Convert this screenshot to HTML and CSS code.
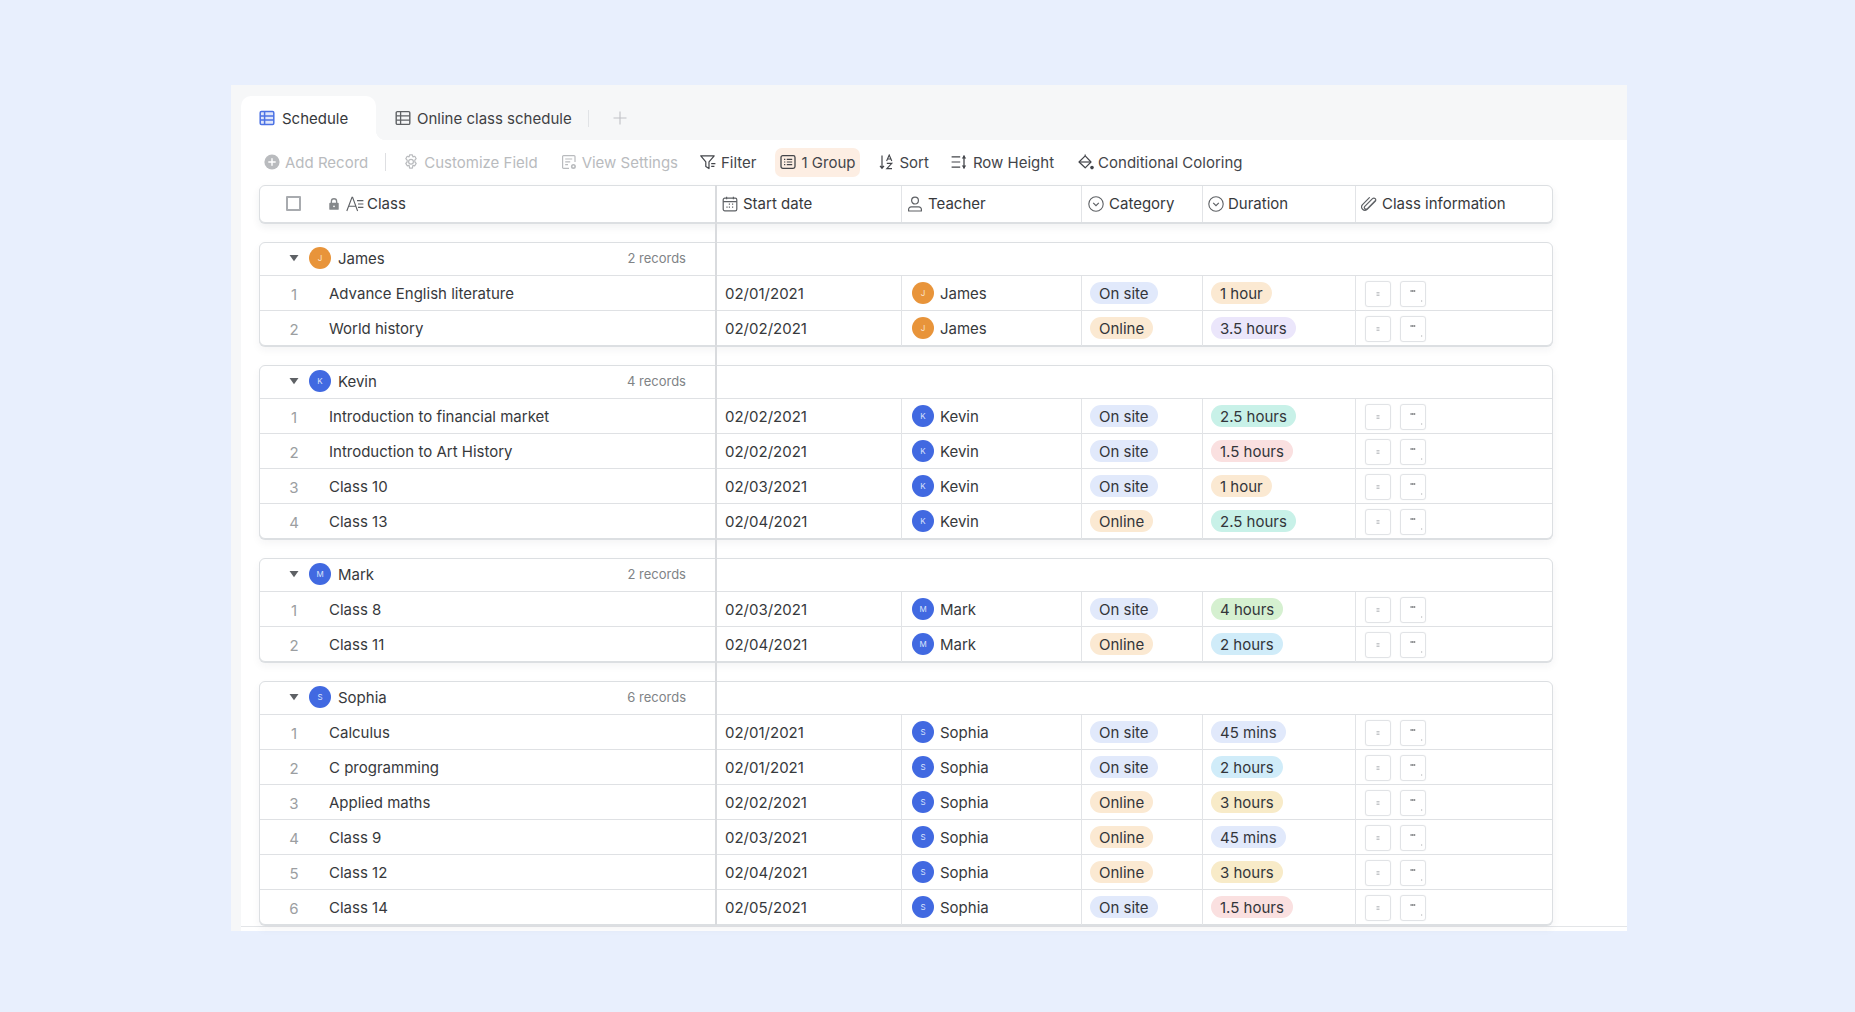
FILE: index.html
```html
<!DOCTYPE html>
<html lang="en">
<head>
<meta charset="utf-8">
<title>Schedule</title>
<link rel="stylesheet" href="styles.css">
</head>
<body>
<svg class="defs" width="0" height="0" aria-hidden="true">
  <symbol id="i-grid" viewBox="0 0 16 16"><rect x="1.2" y="1.6" width="13.6" height="12.8" rx="1.2" fill="none" stroke="currentColor" stroke-width="1.4"/><path d="M1.2 5.9h13.6M1.2 10.1h13.6M5.6 1.6v12.8" fill="none" stroke="currentColor" stroke-width="1.3"/></symbol>
  <symbol id="i-grid-on" viewBox="0 0 16 16"><rect x="1.2" y="1.6" width="13.6" height="12.8" rx="1.2" fill="#dfe6fb" stroke="currentColor" stroke-width="1.5"/><path d="M1.2 5.9h13.6M1.2 10.1h13.6M5.6 1.6v12.8" fill="none" stroke="currentColor" stroke-width="1.5"/></symbol>
  <symbol id="i-add" viewBox="0 0 16 16"><circle cx="8" cy="8" r="7.6" fill="currentColor"/><path d="M8 4.8v6.4M4.8 8h6.4" stroke="#fff" stroke-width="1.4" stroke-linecap="round"/></symbol>
  <symbol id="i-gear" viewBox="0 0 16 16"><path d="M6.6.9h2.8l.5 2 1.9-.6 1.4 2.4-1.4 1.5.1 1.8 1.3 1.4-1.4 2.4-1.9-.5-.5 2.8H6.6l-.5-2.8-1.9.5-1.4-2.4 1.3-1.4.1-1.8-1.4-1.5 1.4-2.4 1.9.6Z" fill="none" stroke="currentColor" stroke-width="1.2" stroke-linejoin="round"/><circle cx="8" cy="7.8" r="2.4" fill="none" stroke="currentColor" stroke-width="1.2"/></symbol>
  <symbol id="i-view" viewBox="0 0 16 16"><path d="M8 14.4H2.6a1 1 0 0 1-1-1V2.6a1 1 0 0 1 1-1h10.4a1 1 0 0 1 1 1V8" fill="none" stroke="currentColor" stroke-width="1.2"/><path d="M4.2 5h7M4.2 7.8h5M4.2 10.6h2.8" stroke="currentColor" stroke-width="1.2" fill="none"/><circle cx="12.4" cy="12.4" r="2.5" fill="currentColor"/><circle cx="12.4" cy="12.4" r=".9" fill="#fff"/></symbol>
  <symbol id="i-filter" viewBox="0 0 16 16"><path d="M.8 1.8h13.4L9 7.8v6.8L5.8 12.4V7.8Z" fill="none" stroke="currentColor" stroke-width="1.2" stroke-linejoin="round"/><path d="M11.2 9.6h4.2M11.2 12.4h3.2" stroke="currentColor" stroke-width="1.2"/></symbol>
  <symbol id="i-list" viewBox="0 0 16 16"><rect x="1" y="1.6" width="14" height="12.8" rx="1.8" fill="none" stroke="currentColor" stroke-width="1.3"/><path d="M4 5.4h1.3M4 8h1.3M4 10.6h1.3M6.8 5.4h5.4M6.8 8h5.4M6.8 10.6h5.4" stroke="currentColor" stroke-width="1.2"/></symbol>
  <symbol id="i-sort" viewBox="0 0 16 16"><path d="M3 1.5v12.6M1 11.8l2 2.4 2-2.4" fill="none" stroke="currentColor" stroke-width="1.2"/><path d="M7.6 7 10.2 1l2.6 6M8.6 5h3.2M7.8 9.4h5l-5 5.2h5.2" fill="none" stroke="currentColor" stroke-width="1.1"/></symbol>
  <symbol id="i-height" viewBox="0 0 16 16"><path d="M.6 2.8h8.6M.6 8h8.6M.6 13.2h8.6" stroke="currentColor" stroke-width="1.2"/><path d="M13 1.6v12.8" stroke="currentColor" stroke-width="1.3"/><path d="M10.8 4.6 13 1.2 15.2 4.6ZM10.8 11.4 13 14.8 15.2 11.4Z" fill="currentColor"/></symbol>
  <symbol id="i-paint" viewBox="0 0 16 16"><path d="M7.2 1.8 13 8 7.2 13.8 1 8Z" fill="none" stroke="currentColor" stroke-width="1.2" stroke-linejoin="round"/><path d="M1 8h12" stroke="currentColor" stroke-width="1.2"/><path d="M7.2 1.8V.4" stroke="currentColor" stroke-width="1.2"/><circle cx="14" cy="13.6" r="1.8" fill="currentColor"/></symbol>
  <symbol id="i-lock" viewBox="0 0 16 16"><path d="M5 7V5a3 3 0 0 1 6 0v2" fill="none" stroke="currentColor" stroke-width="1.5"/><rect x="2.6" y="6.6" width="10.8" height="8" rx="1" fill="currentColor"/><circle cx="8" cy="10.6" r="1" fill="#fff"/></symbol>
  <symbol id="i-text" viewBox="0 0 18 16"><path d="M.8 15 6 1.4h.6L11.6 15M2.8 10.2h7" fill="none" stroke="currentColor" stroke-width="1.1"/><path d="M11 4.6h6.4M12 8h5.4M12 11.4h5.4" stroke="currentColor" stroke-width="1.1"/></symbol>
  <symbol id="i-cal" viewBox="0 0 16 16"><rect x="1.2" y="2.2" width="13.6" height="12.6" rx="1.6" fill="none" stroke="currentColor" stroke-width="1.2"/><path d="M1.2 5.6h13.6M4.6.8v2.4M11.4.8v2.4" stroke="currentColor" stroke-width="1.2"/><path d="M6.8 8.2h1.2M10 8.2h1.2M4.4 11.2h1.2M6.8 11.2h1.2M10 11.2h1.2" stroke="currentColor" stroke-width="1.3"/></symbol>
  <symbol id="i-user" viewBox="0 0 16 16"><circle cx="8" cy="4.6" r="3.4" fill="none" stroke="currentColor" stroke-width="1.2"/><path d="M1.6 15v-1.6a2.6 2.6 0 0 1 2.6-2.6h7.6a2.6 2.6 0 0 1 2.6 2.6V15Z" fill="none" stroke="currentColor" stroke-width="1.2" stroke-linejoin="round"/></symbol>
  <symbol id="i-select" viewBox="0 0 16 16"><circle cx="8" cy="8" r="7.2" fill="none" stroke="currentColor" stroke-width="1.1"/><path d="M5.2 6.8 8 9.6l2.8-2.8" fill="none" stroke="currentColor" stroke-width="1.2"/></symbol>
  <symbol id="i-clip" viewBox="0 0 16 16"><path d="M14 5 6.2 12.8a1.7 1.7 0 0 1-2.4-2.4L11.5 2.6a1.9 1.9 0 0 1 2.7 2.7L6 13.6a3.4 3.4 0 0 1-4.7-4.8L8.4 1.6" fill="none" stroke="currentColor" stroke-width="1.2" stroke-linecap="round"/></symbol>
  <symbol id="i-caret" viewBox="0 0 10 8"><path d="M.5 1h9L5 7.2Z" fill="currentColor"/></symbol>
  <symbol id="i-plus" viewBox="0 0 14 14"><path d="M7 .5v13M.5 7h13" stroke="currentColor" stroke-width="1.1"/></symbol>
  <symbol id="i-thumb" viewBox="0 0 24 24"><path d="M10.5 10.5h3M10.5 12h3M10.5 13.5h3" stroke="#c4c6c9" stroke-width="1"/></symbol>
  <symbol id="i-thumb2" viewBox="0 0 24 24"><path d="M9.5 9h5" stroke="#85878a" stroke-width="1.8" stroke-dasharray="1.2 .4"/><path d="M20 19h1.2" stroke="#a8aaad" stroke-width="1"/></symbol>
</svg>

<main class="app">
  <div class="main">
    <nav class="tabs">
      <div class="tab tab-on"><svg class="ic ic-tab ic-blue"><use href="#i-grid-on"/></svg>Schedule</div>
      <div class="tab tab-off"><svg class="ic ic-tab"><use href="#i-grid"/></svg>Online class schedule</div>
      <span class="tab-sep"></span>
      <svg class="ic tab-plus"><use href="#i-plus"/></svg>
    </nav>
    <section class="body">
      <div class="toolbar">
        <div class="tool off t-add"><svg class="ic"><use href="#i-add"/></svg>Add Record</div>
        <span class="tool-sep"></span>
        <div class="tool off t-field"><svg class="ic"><use href="#i-gear"/></svg>Customize Field</div>
        <div class="tool off t-view"><svg class="ic"><use href="#i-view"/></svg>View Settings</div>
        <div class="tool t-filter"><svg class="ic"><use href="#i-filter"/></svg>Filter</div>
        <div class="tool tool-on"><svg class="ic"><use href="#i-list"/></svg>1 Group</div>
        <div class="tool t-sort"><svg class="ic"><use href="#i-sort"/></svg>Sort</div>
        <div class="tool t-height"><svg class="ic"><use href="#i-height"/></svg>Row Height</div>
        <div class="tool t-paint"><svg class="ic"><use href="#i-paint"/></svg>Conditional Coloring</div>
      </div>

      <div class="sheet">
        <div class="head cols">
          <div class="hc hc-first"><span class="check"></span><svg class="ic ic-lock"><use href="#i-lock"/></svg><svg class="ic ic-text"><use href="#i-text"/></svg>Class</div>
          <div class="hc"><svg class="ic"><use href="#i-cal"/></svg>Start date</div>
          <div class="hc"><svg class="ic"><use href="#i-user"/></svg>Teacher</div>
          <div class="hc"><svg class="ic"><use href="#i-select"/></svg>Category</div>
          <div class="hc"><svg class="ic"><use href="#i-select"/></svg>Duration</div>
          <div class="hc hc-last"><svg class="ic"><use href="#i-clip"/></svg>Class information</div>
        </div>

        <div class="group">
          <div class="ghead"><div class="gleft"><svg class="caret"><use href="#i-caret"/></svg><span class="av av-g orange">J</span><span class="gname">James</span><span class="gcount">2 records</span></div></div>
          <div class="row cols"><div class="c1"><span class="num">1</span>Advance English literature</div><div class="c">02/01/2021</div><div class="c"><span class="av orange">J</span>James</div><div class="c"><span class="pill blue">On site</span></div><div class="c"><span class="pill peach">1 hour</span></div><div class="c files"><span class="thumb"><svg><use href="#i-thumb"/></svg></span><span class="thumb"><svg><use href="#i-thumb2"/></svg></span></div></div>
          <div class="row cols"><div class="c1"><span class="num">2</span>World history</div><div class="c">02/02/2021</div><div class="c"><span class="av orange">J</span>James</div><div class="c"><span class="pill peach">Online</span></div><div class="c"><span class="pill violet">3.5 hours</span></div><div class="c files"><span class="thumb"><svg><use href="#i-thumb"/></svg></span><span class="thumb"><svg><use href="#i-thumb2"/></svg></span></div></div>
        </div>

        <div class="group">
          <div class="ghead"><div class="gleft"><svg class="caret"><use href="#i-caret"/></svg><span class="av av-g royal">K</span><span class="gname">Kevin</span><span class="gcount">4 records</span></div></div>
          <div class="row cols"><div class="c1"><span class="num">1</span>Introduction to financial market</div><div class="c">02/02/2021</div><div class="c"><span class="av royal">K</span>Kevin</div><div class="c"><span class="pill blue">On site</span></div><div class="c"><span class="pill teal">2.5 hours</span></div><div class="c files"><span class="thumb"><svg><use href="#i-thumb"/></svg></span><span class="thumb"><svg><use href="#i-thumb2"/></svg></span></div></div>
          <div class="row cols"><div class="c1"><span class="num">2</span>Introduction to Art History</div><div class="c">02/02/2021</div><div class="c"><span class="av royal">K</span>Kevin</div><div class="c"><span class="pill blue">On site</span></div><div class="c"><span class="pill rose">1.5 hours</span></div><div class="c files"><span class="thumb"><svg><use href="#i-thumb"/></svg></span><span class="thumb"><svg><use href="#i-thumb2"/></svg></span></div></div>
          <div class="row cols"><div class="c1"><span class="num">3</span>Class 10</div><div class="c">02/03/2021</div><div class="c"><span class="av royal">K</span>Kevin</div><div class="c"><span class="pill blue">On site</span></div><div class="c"><span class="pill peach">1 hour</span></div><div class="c files"><span class="thumb"><svg><use href="#i-thumb"/></svg></span><span class="thumb"><svg><use href="#i-thumb2"/></svg></span></div></div>
          <div class="row cols"><div class="c1"><span class="num">4</span>Class 13</div><div class="c">02/04/2021</div><div class="c"><span class="av royal">K</span>Kevin</div><div class="c"><span class="pill peach">Online</span></div><div class="c"><span class="pill teal">2.5 hours</span></div><div class="c files"><span class="thumb"><svg><use href="#i-thumb"/></svg></span><span class="thumb"><svg><use href="#i-thumb2"/></svg></span></div></div>
        </div>

        <div class="group">
          <div class="ghead"><div class="gleft"><svg class="caret"><use href="#i-caret"/></svg><span class="av av-g royal">M</span><span class="gname">Mark</span><span class="gcount">2 records</span></div></div>
          <div class="row cols"><div class="c1"><span class="num">1</span>Class 8</div><div class="c">02/03/2021</div><div class="c"><span class="av royal">M</span>Mark</div><div class="c"><span class="pill blue">On site</span></div><div class="c"><span class="pill green">4 hours</span></div><div class="c files"><span class="thumb"><svg><use href="#i-thumb"/></svg></span><span class="thumb"><svg><use href="#i-thumb2"/></svg></span></div></div>
          <div class="row cols"><div class="c1"><span class="num">2</span>Class 11</div><div class="c">02/04/2021</div><div class="c"><span class="av royal">M</span>Mark</div><div class="c"><span class="pill peach">Online</span></div><div class="c"><span class="pill sky">2 hours</span></div><div class="c files"><span class="thumb"><svg><use href="#i-thumb"/></svg></span><span class="thumb"><svg><use href="#i-thumb2"/></svg></span></div></div>
        </div>

        <div class="group">
          <div class="ghead"><div class="gleft"><svg class="caret"><use href="#i-caret"/></svg><span class="av av-g royal">S</span><span class="gname">Sophia</span><span class="gcount">6 records</span></div></div>
          <div class="row cols"><div class="c1"><span class="num">1</span>Calculus</div><div class="c">02/01/2021</div><div class="c"><span class="av royal">S</span>Sophia</div><div class="c"><span class="pill blue">On site</span></div><div class="c"><span class="pill blue">45 mins</span></div><div class="c files"><span class="thumb"><svg><use href="#i-thumb"/></svg></span><span class="thumb"><svg><use href="#i-thumb2"/></svg></span></div></div>
          <div class="row cols"><div class="c1"><span class="num">2</span>C programming</div><div class="c">02/01/2021</div><div class="c"><span class="av royal">S</span>Sophia</div><div class="c"><span class="pill blue">On site</span></div><div class="c"><span class="pill sky">2 hours</span></div><div class="c files"><span class="thumb"><svg><use href="#i-thumb"/></svg></span><span class="thumb"><svg><use href="#i-thumb2"/></svg></span></div></div>
          <div class="row cols"><div class="c1"><span class="num">3</span>Applied maths</div><div class="c">02/02/2021</div><div class="c"><span class="av royal">S</span>Sophia</div><div class="c"><span class="pill peach">Online</span></div><div class="c"><span class="pill sand">3 hours</span></div><div class="c files"><span class="thumb"><svg><use href="#i-thumb"/></svg></span><span class="thumb"><svg><use href="#i-thumb2"/></svg></span></div></div>
          <div class="row cols"><div class="c1"><span class="num">4</span>Class 9</div><div class="c">02/03/2021</div><div class="c"><span class="av royal">S</span>Sophia</div><div class="c"><span class="pill peach">Online</span></div><div class="c"><span class="pill blue">45 mins</span></div><div class="c files"><span class="thumb"><svg><use href="#i-thumb"/></svg></span><span class="thumb"><svg><use href="#i-thumb2"/></svg></span></div></div>
          <div class="row cols"><div class="c1"><span class="num">5</span>Class 12</div><div class="c">02/04/2021</div><div class="c"><span class="av royal">S</span>Sophia</div><div class="c"><span class="pill peach">Online</span></div><div class="c"><span class="pill sand">3 hours</span></div><div class="c files"><span class="thumb"><svg><use href="#i-thumb"/></svg></span><span class="thumb"><svg><use href="#i-thumb2"/></svg></span></div></div>
          <div class="row cols"><div class="c1"><span class="num">6</span>Class 14</div><div class="c">02/05/2021</div><div class="c"><span class="av royal">S</span>Sophia</div><div class="c"><span class="pill blue">On site</span></div><div class="c"><span class="pill rose">1.5 hours</span></div><div class="c files"><span class="thumb"><svg><use href="#i-thumb"/></svg></span><span class="thumb"><svg><use href="#i-thumb2"/></svg></span></div></div>
        </div>
      </div>
    </section>
  </div>
</main>
</body>
</html>
```

FILE: styles.css
```css
* { box-sizing: border-box; }
html, body { margin: 0; padding: 0; height: 100%; }
body {
  background: #e8effd;
  font-family: Inter, "Liberation Sans", sans-serif;
  font-size: 15px;
  color: #37393c;
  overflow: hidden;
}
.defs { position: absolute; }
.ic { width: 16px; height: 16px; flex: none; display: block; }

.app {
  width: 1396px;
  height: 846px;
  margin: 85px 0 0 231px;
  padding-left: 10px;
  background: #f6f7f8;
}
.main { display: flex; flex-direction: column; height: 100%; }

/* tabs */
.tabs { display: flex; align-items: center; height: 55px; padding-top: 11px; flex: none; }
.tab { display: flex; align-items: center; height: 44px; }
.tab-on {
  position: relative;
  width: 135px;
  padding-left: 18px;
  gap: 7px;
  background: #fff;
  border-radius: 10px 10px 0 0;
}
.tab-on::after {
  content: "";
  position: absolute;
  left: 100%;
  bottom: 0;
  width: 10px;
  height: 10px;
  background: radial-gradient(circle at 100% 0, transparent 10px, #fff 10.5px);
}
.tab-off { margin-left: 19px; gap: 6px; color: #3f4144; }
.ic-tab { width: 16px; height: 16px; color: #5f6265; }
.ic-blue { color: #4c72e4; }
.tab-sep { width: 1px; height: 17px; margin-left: 16px; background: #e1e3e6; }
.tab-plus { width: 14px; height: 14px; margin-left: 24px; color: #c0c2c5; }

/* toolbar */
.body { flex: 1; background: #fff; border-bottom: 1px solid #e3e5e8; margin-bottom: 4px; box-shadow: 0 4px 0 #fff; }
.toolbar { display: flex; align-items: center; height: 45px; padding: 0 0 1px 23px; color: #43454a; }
.tool { display: flex; align-items: center; gap: 5px; height: 29px; }
.off { color: #b9bbbe; }
.tool-sep { width: 1px; height: 18px; margin: 0 17px 0 17px; background: #dedfe2; }
.t-view { margin-left: 23px; }
.t-filter { margin-left: 22px; }
.tool-on { margin-left: 18px; padding: 0 5px; gap: 6px; background: #fdeee3; border-radius: 7px; }
.t-sort { margin-left: 19px; gap: 4px; }
.t-height { margin-left: 22px; gap: 6px; }
.t-paint { margin-left: 24px; gap: 4px; }

/* sheet */
.sheet { position: relative; width: 1294px; margin-left: 18px; display: flex; flex-direction: column; gap: 19px; }
.sheet::before {
  content: "";
  position: absolute;
  left: 456px;
  top: 0;
  bottom: 0;
  width: 2px;
  background: #d9dbde;
  z-index: 2;
}
.cols { display: grid; grid-template-columns: 455px 187px 180px 121px 153px 1fr; }
.head {
  height: 38px;
  background: #fff;
  border: 1px solid #dcdfe2;
  border-radius: 6px;
  box-shadow: 0 1px 0 #dcdfe2, 0 4px 8px rgba(30, 40, 60, .07);
}
.hc { display: flex; align-items: center; gap: 5px; padding: 0 0 1px 5px; border-right: 1px solid #e2e4e7; }
.hc:nth-child(2) { padding-left: 7px; }
.hc:nth-child(4) { padding-left: 6px; }
.hc:nth-child(5) { gap: 4px; }
.hc-first { padding-left: 26px; border-right: 0; gap: 0; }
.hc-last { border-right: 0; padding-left: 5px; }
.check { width: 15px; height: 15px; border: 2px solid #a8abaf; border-radius: 1px; margin-right: 26px; }
.ic-lock { width: 14px; height: 14px; color: #85888b; margin-right: 5px; }
.ic-text { width: 18px; height: 16px; color: #5e6165; margin-right: 3px; }
.hc .ic:not(.ic-lock):not(.ic-text) { color: #5e6165; }

.group {
  background: #fff;
  border: 1px solid #dcdfe2;
  border-radius: 6px;
  box-shadow: 0 1px 0 #dcdfe2, 0 4px 8px rgba(30, 40, 60, .05);
}
.ghead { height: 33px; border-bottom: 1px solid #dfe1e4; }
.gleft { display: flex; align-items: center; height: 100%; width: 455px; padding: 0 0 2px 29px; }
.caret { width: 10px; height: 8px; color: #5e6165; }
.gname { margin-left: 7px; }
.gcount { margin-left: auto; margin-right: 29px; font-size: 13px; color: #808386; }
.av {
  display: inline-flex;
  align-items: center;
  justify-content: center;
  width: 22px;
  height: 22px;
  border-radius: 50%;
  font-size: 8px;
  color: #fff;
  margin-right: 6px;
  flex: none;
}
.av-g { margin: 0 0 0 10px; }
.orange { background: #e8943a; color: #fbe3c8; }
.royal { background: #4169e1; color: #dbe4fb; }

.row { height: 35px; border-bottom: 1px solid #dfe1e4; }
.row:last-child { height: 34px; border-bottom: 0; }
.c1 { display: flex; align-items: center; margin-left: 18px; }
.num { width: 32px; margin-right: 19px; padding-top: 2px; text-align: center; color: #9b9ea1; }
.c { display: flex; align-items: center; padding: 0 0 1px 8px; border-right: 1px solid #e2e4e7; margin-bottom: -1px; }
.c:nth-child(2) { padding-left: 10px; }
.c:nth-child(3) { padding-left: 10px; }
.files { border-right: 0; padding: 1px 0 0 9px; gap: 9px; }
.pill { display: inline-flex; align-items: center; height: 22px; padding: 0 9px; border-radius: 11px; color: #33353a; }
.blue { background: #e1e9fb; }
.peach { background: #fbe9d2; }
.violet { background: #ebe6fb; }
.teal { background: #c8f1e8; }
.rose { background: #fae0e0; }
.green { background: #d5f0d0; }
.sky { background: #d0ecf9; }
.sand { background: #f8ebc8; }
.thumb { width: 26px; height: 26px; border: 1px solid #e1e3e6; border-radius: 3px; box-shadow: 0 0 1px #e1e3e6; display: block; }
.thumb svg { display: block; width: 24px; height: 24px; }
```
